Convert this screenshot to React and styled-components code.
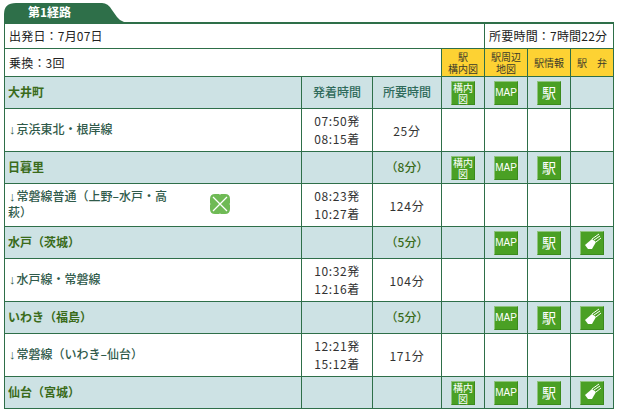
import React from "react";
import styled, {createGlobalStyle} from "styled-components";

const GlobalStyle = createGlobalStyle`
  html, body {
    margin: 0;
    background: #fff;
    font-family: "Noto Sans CJK JP", "Liberation Sans", sans-serif;
  }
`

const LINE = "#2e6f49"

const routeRows = [
   {station: "大井町", head: true, map: true, info: true, inner: true},
   {line: "京浜東北・根岸線", dep: "07:50発", arr: "08:15着", mins: "25分"},
   {station: "日暮里", wait: "（8分）", inner: true, map: true, info: true},
   {line: "常磐線普通（上野–水戸・高萩）", dep: "08:23発", arr: "10:27着", mins: "124分", broken: true},
   {station: "水戸（茨城）", wait: "（5分）", map: true, info: true, bento: true},
   {line: "水戸線・常磐線", dep: "10:32発", arr: "12:16着", mins: "104分"},
   {station: "いわき（福島）", wait: "（5分）", map: true, info: true, bento: true},
   {line: "常磐線（いわき–仙台）", dep: "12:21発", arr: "15:12着", mins: "171分"},
   {station: "仙台（宮城）", inner: true, map: true, info: true, bento: true},
]

export default function App() {
   return (
      <Page>
         <GlobalStyle/>
         <Tab>第1経路</Tab>
         <RouteTable>
            <colgroup>
               <col style={{width: 297}}/>
               <col style={{width: 71}}/>
               <col style={{width: 69}}/>
               <col style={{width: 43}}/>
               <col style={{width: 43}}/>
               <col style={{width: 43}}/>
               <col style={{width: 43}}/>
            </colgroup>
            <tbody>
               <tr>
                  <InfoCell colSpan={4} $h={23}>出発日：7月07日</InfoCell>
                  <InfoCell colSpan={3} $h={23}>所要時間：7時間22分</InfoCell>
               </tr>
               <tr>
                  <InfoCell colSpan={3} $h={26}>乗換：3回</InfoCell>
                  <LinkHead>駅<br/>構内図</LinkHead>
                  <LinkHead>駅周辺<br/>地図</LinkHead>
                  <LinkHead>駅情報</LinkHead>
                  <LinkHead>駅　弁</LinkHead>
               </tr>
               {routeRows.map((row, i) => row.station ? (
                  <StationRow key={i}>
                     <StationName>{row.station}</StationName>
                     <TimeHead>{row.head && "発着時間"}</TimeHead>
                     <TimeHead $plain={!row.head}>{row.head ? "所要時間" : row.wait}</TimeHead>
                     <IconCell>{row.inner && <GreenButton $small>構内<br/>図</GreenButton>}</IconCell>
                     <IconCell>{row.map && <GreenButton $map>MAP</GreenButton>}</IconCell>
                     <IconCell>{row.info && <GreenButton>駅</GreenButton>}</IconCell>
                     <IconCell>{row.bento && <GreenButton><BentoIcon/></GreenButton>}</IconCell>
                  </StationRow>
               ) : (
                  <LineRow key={i}>
                     <LineCell>
                        <LineName><Arrow>↓</Arrow>{row.line}</LineName>
                        {row.broken && <BrokenImage/>}
                     </LineCell>
                     <TimesCell>{row.dep}<br/>{row.arr}</TimesCell>
                     <MinsCell>{row.mins}</MinsCell>
                     <td/><td/><td/><td/>
                  </LineRow>
               ))}
            </tbody>
         </RouteTable>
      </Page>
   )
}

function BentoIcon() {
   return (
      <svg width="22" height="22" viewBox="0 0 22 22">
         <path d="M4 13 L11 7 L15 10 L11 17 L7 17 Z" fill="#fff"/>
         <path d="M11 7 L18 2 M13 8 L19 4 M15 10 L20 6" stroke="#fff" strokeWidth="1"/>
      </svg>
   )
}

function BrokenImage() {
   return (
      <BrokenWrap width="20" height="20" viewBox="0 0 20 20">
         <path
            d="M5 0 H9 Q10 1 11 0 H15 Q20 0 20 5 V9 Q19 10 20 11 V15 Q20 20 15 20 H11 Q10 19 9 20 H5 Q0 20 0 15 V11 Q1 10 0 9 V5 Q0 0 5 0 Z"
            fill="#6fba55"
         />
         <path d="M3 3 L17 17 M17 3 L3 17" stroke="#fff" strokeWidth="1.3"/>
      </BrokenWrap>
   )
}

const Page = styled.div`
  width: 610px;
  padding: 3px 4px 0;
  color: #333;
  font-size: 12px;
`

const Tab = styled.div`
  width: 120px;
  height: 19px;
  box-sizing: border-box;
  padding-left: 24px;
  background: ${LINE};
  clip-path: path("M0 19 V11 Q0 0 12 0 H98 Q104 0 108 7 L113 14 Q116 18 120 19 Z");
  color: #fff;
  font-size: 12px;
  font-weight: 700;
  line-height: 18px;
`

const RouteTable = styled.table`
  table-layout: fixed;
  width: 610px;
  border-collapse: collapse;
  border-top: 2px solid ${LINE};

  td {
    border: 1px solid ${LINE};
    padding: 0;
  }
`

const InfoCell = styled.td`
  height: ${({$h}) => $h}px;
  padding: 0 3px 1px 4px !important;
  color: #222;
  letter-spacing: 0.2px;
`

const LinkHead = styled.td`
  background: #fdd233;
  color: #3a3a2a;
  font-size: 10px;
  line-height: 12px;
  text-align: center;
`

const StationRow = styled.tr`
  height: 32px;
  background: #cde2e4;
`

const StationName = styled.td`
  padding: 0 0 2px 3px !important;
  color: #3a6b1a;
  font-weight: 700;
  font-size: 12px;
`

const TimeHead = styled.td`
  padding-bottom: 2px !important;
  color: ${({$plain}) => $plain ? "#3a6b1a" : "#2f6a5a"};
  font-weight: 500;
  font-size: 12px;
  text-align: center;
`

const IconCell = styled.td`
  text-align: center;
  vertical-align: middle;
`

const GreenButton = styled.div`
  display: inline-flex;
  align-items: center;
  justify-content: center;
  width: 24px;
  height: 24px;
  vertical-align: middle;
  background: #4aa024;
  border-right: 1px solid #3a8a1c;
  border-bottom: 1px solid #3a8a1c;
  border-left: 1px solid #8fc47c;
  border-top: 1px solid #8fc47c;
  box-sizing: border-box;
  color: #fff;
  font-family: ${({$map}) => $map ? '"Liberation Sans", sans-serif' : "inherit"};
  font-size: ${({$small, $map}) => $small ? 10 : $map ? 10 : 14}px;
  font-weight: 400;
  line-height: 11px;
  text-align: center;
  white-space: nowrap;
`

const LineRow = styled.tr`
  height: 43px;
`

const LineCell = styled.td`
  position: relative;
  padding: 0 0 3px 3px !important;
`

const LineName = styled.div`
  width: 168px;
  color: #2f5a4a;
  font-size: 12px;
  font-weight: 500;
  line-height: 15px;
`

const Arrow = styled.span`
  margin: 0 1px;
  font-family: "Liberation Sans", sans-serif;
  font-size: 13px;
  font-weight: 700;
`

const BrokenWrap = styled.svg`
  position: absolute;
  left: 205px;
  top: 10px;
`

const TimesCell = styled.td`
  color: #333;
  font-size: 12px;
  letter-spacing: 0.6px;
  line-height: 18px;
  text-align: center;
`

const MinsCell = styled.td`
  color: #333;
  font-size: 12px;
  letter-spacing: 0.8px;
  text-align: center;
`
